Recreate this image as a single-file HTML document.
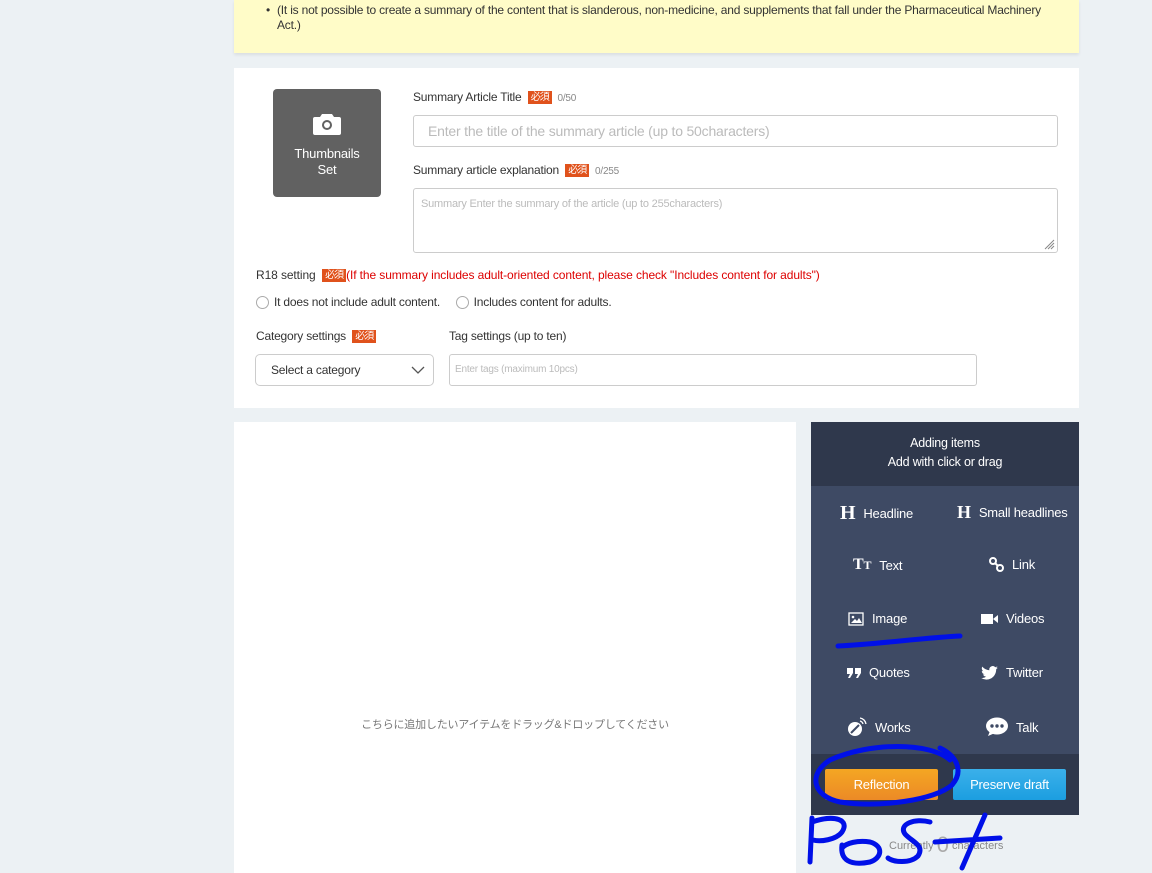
<!DOCTYPE html>
<html><head><meta charset="utf-8"><style>
*{box-sizing:border-box;margin:0;padding:0}
body{width:1152px;height:873px;background:#ecf1f4;font-family:"Liberation Sans","Noto Sans CJK JP",sans-serif;position:relative;overflow:hidden;color:#333;letter-spacing:-0.2px}
.abs{position:absolute}
.note{left:234px;top:0;width:845px;height:53px;background:#fffcc8;font-size:12px;color:#333;box-shadow:0 2px 3px rgba(0,0,0,.08)}
.card{left:234px;top:68px;width:845px;height:340px;background:#fff}
.req{display:inline-block;background:#e0521c;color:#fff;font-size:10px;padding:0 3px;line-height:13px;vertical-align:1px;letter-spacing:-1px}
.lbl{font-size:12px;color:#333}
.cnt{font-size:10px;color:#888}
.inp{border:1px solid #ccc;border-radius:3px;background:#fff;color:#bbb}
.radio{display:inline-block;width:13px;height:13px;border:1px solid #aaa;border-radius:50%;vertical-align:-3px;margin-right:5px}
.panel{left:811px;top:422px;width:268px;height:393px;background:#3e4a64}
.item{position:absolute;color:#fff;font-size:13px;display:flex;align-items:center;gap:8px}
</style></head><body>
<div class="abs note"><div style="position:absolute;left:43px;top:3px;line-height:15px;width:790px">
<span style="position:absolute;left:-11px">•</span>(It is not possible to create a summary of the content that is slanderous, non-medicine, and supplements that fall under the Pharmaceutical Machinery Act.)</div></div>

<div class="abs card">
 <div class="abs" style="left:39px;top:21px;width:108px;height:108px;background:#616161;border-radius:4px;color:#fff;text-align:center;font-size:13px">
  <svg class="abs" style="left:39px;top:22px" width="30" height="26" viewBox="0 0 30 26"><path d="M10 3h10l2 3h5a2 2 0 0 1 2 2v14a2 2 0 0 1-2 2H3a2 2 0 0 1-2-2V8a2 2 0 0 1 2-2h5z" fill="#fff"/><circle cx="15" cy="14" r="5" fill="#616161"/><circle cx="15" cy="14" r="3" fill="#fff"/></svg>
  <div class="abs" style="left:0;right:0;top:57px;line-height:16px">Thumbnails<br>Set</div>
 </div>
 <div class="abs lbl" style="left:179px;top:22px">Summary Article Title &nbsp;<span class="req">必須</span> <span class="cnt">&nbsp;0/50</span></div>
 <div class="abs inp" style="left:179px;top:47px;width:645px;height:32px;font-size:14px;padding:7px 14px">Enter the title of the summary article (up to 50characters)</div>
 <div class="abs lbl" style="left:179px;top:95px">Summary article explanation &nbsp;<span class="req">必須</span> <span class="cnt">&nbsp;0/255</span></div>
 <div class="abs inp" style="left:179px;top:120px;width:645px;height:65px;font-size:11px;padding:9px 7px">Summary Enter the summary of the article (up to 255characters)
  <svg class="abs" style="right:2px;bottom:2px" width="11" height="11"><path d="M10 1L1 10M10 4L4 10M10 7L7 10" stroke="#888"/></svg></div>
 <div class="abs lbl" style="left:22px;top:200px;letter-spacing:-0.1px">R18 setting &nbsp;<span class="req">必須</span><span style="color:#d00">(If the summary includes adult-oriented content, please check "Includes content for adults")</span></div>
 <div class="abs lbl" style="left:22px;top:227px"><span class="radio"></span>It does not include adult content. &nbsp;&nbsp;&nbsp;&nbsp;<span class="radio"></span>Includes content for adults.</div>
 <div class="abs lbl" style="left:22px;top:261px">Category settings &nbsp;<span class="req">必須</span></div>
 <div class="abs lbl" style="left:215px;top:261px">Tag settings (up to ten)</div>
 <div class="abs inp" style="left:21px;top:286px;width:179px;height:32px;color:#333;font-size:12px;padding:8px 15px;border-radius:5px">Select a category
  <svg class="abs" style="right:8px;top:11px" width="14" height="9"><path d="M1 1l6 6 6-6" stroke="#555" fill="none" stroke-width="1.3"/></svg></div>
 <div class="abs inp" style="left:215px;top:286px;width:528px;height:32px;font-size:10px;padding:9px 5px">Enter tags (maximum 10pcs)</div>
</div>

<div class="abs" style="left:234px;top:422px;width:562px;height:451px;background:#fff">
 <div class="abs" style="left:0;right:0;top:294px;text-align:center;font-size:11px;color:#777">こちらに追加したいアイテムをドラッグ&amp;ドロップしてください</div>
</div>

<div class="abs panel">
 <div class="abs" style="left:0;top:0;width:268px;height:64px;background:#2f384c;color:#fff;text-align:center;font-size:12.5px;padding-top:12px;line-height:19px">Adding items<br>Add with click or drag</div>
 <div class="item" style="left:29px;top:80px"><b style="font-family:'Liberation Serif';font-size:20px">H</b>Headline</div>
 <div class="item" style="left:146px;top:80px"><b style="font-family:'Liberation Serif';font-size:18px">H</b>Small headlines</div>
 <div class="item" style="left:42px;top:134px"><b style="font-family:'Liberation Serif';font-size:16px">T<span style="font-size:12px">T</span></b>Text</div>
 <div class="item" style="left:178px;top:135px"><svg width="15" height="15" viewBox="0 0 15 15"><circle cx="4" cy="4" r="3" fill="none" stroke="#fff" stroke-width="2"/><circle cx="11" cy="11" r="3" fill="none" stroke="#fff" stroke-width="2"/><path d="M6 6l3 3" stroke="#fff" stroke-width="2"/></svg>Link</div>
 <div class="item" style="left:37px;top:189px"><svg width="16" height="14"><rect x="1" y="1" width="14" height="12" fill="none" stroke="#fff" stroke-width="1.3"/><path d="M3 11l4-4 2 2 2-3 3 5z" fill="#fff"/><circle cx="5" cy="5" r="1.3" fill="#fff"/></svg>Image</div>
 <div class="item" style="left:170px;top:189px"><svg width="17" height="12"><rect x="0" y="1" width="12" height="10" fill="#fff"/><path d="M12 6l5-4v8z" fill="#fff"/></svg>Videos</div>
 <div class="item" style="left:36px;top:243px"><svg width="14" height="10"><path d="M0 0h6v5l-3 5H1l2-4H0zM8 0h6v5l-3 5H9l2-4H8z" fill="#fff"/></svg>Quotes</div>
 <div class="item" style="left:170px;top:243px"><svg width="17" height="14" viewBox="0 0 24 20"><path d="M24 2.4a10 10 0 0 1-2.8.8 5 5 0 0 0 2.1-2.7 10 10 0 0 1-3.1 1.2A4.9 4.9 0 0 0 11.8 6 14 14 0 0 1 1.7.9a4.9 4.9 0 0 0 1.5 6.6 4.9 4.9 0 0 1-2.2-.6 4.9 4.9 0 0 0 3.900 4.8 5 5 0 0 1-2.200.1 4.9 4.9 0 0 0 4.6 3.4A9.9 9.9 0 0 1 0 17.2 14 14 0 0 0 7.5 19.4c9.1 0 14-7.5 14-14v-.6A10 10 0 0 0 24 2.4z" fill="#fff"/></svg>Twitter</div>
 <div class="item" style="left:36px;top:295px"><svg width="20" height="20" viewBox="0 0 20 20"><circle cx="8" cy="12" r="7" fill="#fff"/><path d="M4 16l8-8" stroke="#3e4a64" stroke-width="2"/><path d="M13 4a4 4 0 0 1 3 3M13 1a7 7 0 0 1 6 6" stroke="#fff" fill="none" stroke-width="1.3"/></svg>Works</div>
 <div class="item" style="left:175px;top:295px"><svg width="22" height="20" viewBox="0 0 22 20"><ellipse cx="11" cy="9" rx="11" ry="8.5" fill="#fff"/><path d="M4 14l-2 5 7-3z" fill="#fff"/><circle cx="6" cy="9" r="1.7" fill="#3e4a64"/><circle cx="11" cy="9" r="1.7" fill="#3e4a64"/><circle cx="16" cy="9" r="1.7" fill="#3e4a64"/></svg>Talk</div>
 <div class="abs" style="left:0;top:332px;width:268px;height:61px;background:#2f384c"></div>
 <div class="abs" style="left:14px;top:347px;width:113px;height:31px;background:linear-gradient(#f4a623,#ec8a26);border-radius:2px;color:#fff;font-size:13px;text-align:center;line-height:31px">Reflection</div>
 <div class="abs" style="left:142px;top:347px;width:113px;height:31px;background:linear-gradient(#3bb0ea,#1c9ee0);border-radius:2px;color:#fff;font-size:13px;text-align:center;line-height:31px">Preserve draft</div>
</div>
<div class="abs" style="left:889px;top:832px;font-size:11px;color:#888;letter-spacing:0">Currently <span style="font-size:22px;color:#aaa;vertical-align:-3px">0</span> characters</div>

<svg class="abs" style="left:0;top:0" width="1152" height="873">
 <g fill="none" stroke="#0010e8" stroke-width="5" stroke-linecap="round" stroke-linejoin="round">
  <path d="M838 646C880 644 920 638 960 636"/>
  <path d="M950 760C930 742 870 742 830 760 808 774 812 796 840 802 880 808 935 800 952 785 965 770 955 755 940 748"/>
  <path d="M812 818L810 862M812 822C835 814 850 820 842 832 836 840 820 842 813 840"/>
  <path d="M842 845C840 860 850 866 870 862 882 858 884 846 870 842 858 840 846 843 842 848"/>
  <path d="M930 822C915 818 898 824 905 834 912 842 925 845 918 856 910 864 893 862 888 858"/>
  <path d="M985 815L962 868M935 842L1000 838"/>
 </g>
</svg>
</body></html>
